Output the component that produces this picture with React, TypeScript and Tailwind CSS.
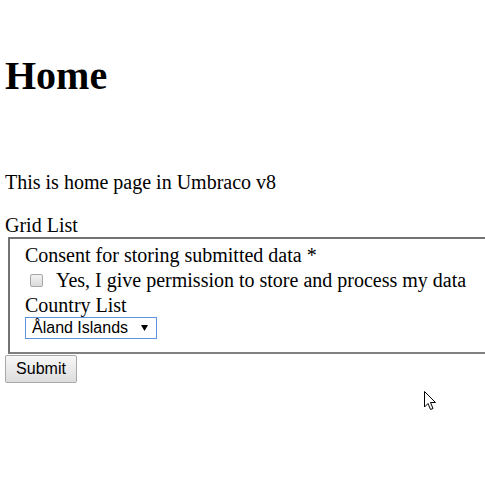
export default function App() {
  return (
    <div className="relative min-h-screen bg-white px-[5px] text-[20px] text-black font-['Liberation_Serif','Times_New_Roman',serif]">
      <h1 className="pt-[53px] text-[40px] font-bold leading-[46px]">Home</h1>
      <p className="mt-[72px] leading-[23px]">This is home page in Umbraco v8</p>
      <form>
        <div className="mt-[20px] leading-[23px]">Grid List</div>
        <fieldset className="ml-[3px] w-[500px] border-2 border-t-[#737373] border-l-[#737373] border-b-[#808080] border-r-[#808080] px-[15px] pt-[5px] pb-[13px]">
          <div className="leading-[23px]">Consent for storing submitted data *</div>
          <label className="flex h-[27px] items-center">
            <span className="ml-[5px] h-[13px] w-[13px] rounded-[2px] border border-[#a6a6a6] bg-gradient-to-b from-[#f2f2f2] to-[#dcdcdc]" />
            <span className="ml-[13px] leading-[27px]">Yes, I give permission to store and process my data</span>
          </label>
          <div className="leading-[23px]">Country List</div>
          <div className="flex h-[22px] w-[132px] items-center justify-between border border-[#5b93e0] bg-white pl-[6px] pr-[8px] text-[16px] font-['Liberation_Sans',Arial,sans-serif] leading-[20px]">
            <span>Åland Islands</span>
            <svg width="7" height="6" viewBox="0 0 7 6">
              <path d="M0 0 H7 L3.5 6 Z" fill="#000" />
            </svg>
          </div>
        </fieldset>
        <button
          type="button"
          className="mt-[1px] block h-[28px] w-[72px] rounded-[2px] border border-[#a9a9a9] bg-gradient-to-b from-[#f7f7f7] to-[#dddddd] text-[16px] font-['Liberation_Sans',Arial,sans-serif] leading-[20px] text-black"
        >
          Submit
        </button>
      </form>
      <svg className="absolute left-[424px] top-[391px]" width="13" height="20" viewBox="0 0 13 20">
        <path d="M0.5 0.5 V16 L4 12.5 L6.5 18.5 L9 17.5 L6.5 11.5 H11.5 Z" fill="#fff" stroke="#000" strokeWidth="1" strokeLinejoin="miter" />
      </svg>
    </div>
  )
}
